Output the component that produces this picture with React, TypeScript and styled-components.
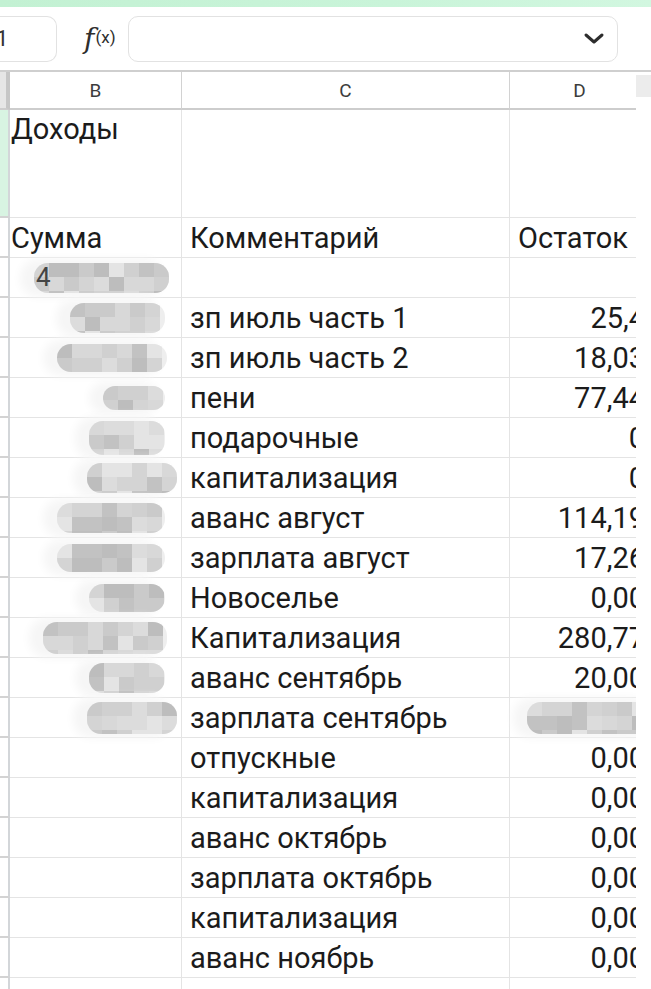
import React from "react";
import styled, { createGlobalStyle } from "styled-components";

const GlobalStyle = createGlobalStyle`
  html, body {
    margin: 0;
    padding: 0;
    background: #ffffff;
    overflow: hidden;
  }
  body {
    font-family: Roboto, "Noto Sans", "Liberation Sans", sans-serif;
    color: #1b1b1b;
  }
`;

const Page = styled.div`
  width: 651px;
  height: 989px;
  overflow: hidden;
  display: flex;
  flex-direction: column;
`;

const TopBand = styled.div`
  flex-shrink: 0;
  height: 7px;
  background: linear-gradient(90deg, #c3f1d3 0%, #c9f4d9 60%, #d2f7e0 100%);
`;

const Toolbar = styled.div`
  flex-shrink: 0;
  height: 63px;
  display: flex;
  align-items: center;
  border-bottom: 2px solid #cfcfcf;
`;

const NameBox = styled.div`
  width: 57px;
  height: 46px;
  box-sizing: border-box;
  border: 1px solid #e2e2e2;
  border-left: none;
  border-radius: 0 10px 10px 0;
  display: flex;
  align-items: center;
  font-size: 22px;
  color: #333;
  overflow: hidden;
  text-indent: -4px;
`;

const Fx = styled.div`
  margin-left: 27px;
  width: 44px;
  display: flex;
  align-items: center;
  color: #2e2e2e;
`;

const FxF = styled.span`
  font-family: "DejaVu Serif", serif;
  font-style: italic;
  font-size: 28px;
  line-height: 1;
`;

const FxX = styled.span`
  font-size: 17px;
  margin-left: 1px;
  margin-top: -4px;
`;

const FormulaInput = styled.div`
  width: 490px;
  height: 46px;
  box-sizing: border-box;
  border: 1px solid #e2e2e2;
  border-radius: 10px;
  display: flex;
  align-items: center;
  justify-content: flex-end;
  padding-right: 12px;
`;

const Body = styled.div`
  display: flex;
  flex-shrink: 0;
`;

const Sheet = styled.div`
  width: 636px;
  overflow: hidden;
  display: grid;
  grid-template-columns: 10px 172px 328px 140px;
  align-content: start;
`;

const Gutter = styled.div`
  flex: 1;
`;

const GutterHead = styled.div`
  margin-top: 3px;
  height: 22px;
  background: #ececec;
`;

const Corner = styled.div`
  height: 38px;
  box-sizing: border-box;
  background: #e6e6e6;
  border-right: 4px solid #c6c6c6;
  border-bottom: 2px solid #cdcdcd;
`;

const ColHead = styled.div`
  height: 38px;
  box-sizing: border-box;
  border-right: 1px solid #d2d2d2;
  border-bottom: 2px solid #cdcdcd;
  display: flex;
  align-items: center;
  justify-content: center;
  font-size: 19px;
  color: #3c3c3c;
`;

const RowHead = styled.div<{ $sel?: boolean; $tall?: boolean }>`
  height: ${({ $tall }) => ($tall ? 108 : 40)}px;
  box-sizing: border-box;
  background: ${({ $sel }) => ($sel ? "#d8f4e2" : "#ffffff")};
  border-right: 2px solid #d3d6d9;
  border-bottom: 2px solid #d3d3d3;
`;

const Cell = styled.div<{ $tall?: boolean; $align?: "left" | "right"; $pad?: number }>`
  height: ${({ $tall }) => ($tall ? 108 : 40)}px;
  box-sizing: border-box;
  border-right: 1px solid #e4e4e4;
  border-bottom: 1px solid #e4e4e4;
  display: flex;
  align-items: ${({ $tall }) => ($tall ? "flex-start" : "center")};
  justify-content: ${({ $align }) => ($align === "right" ? "flex-end" : "flex-start")};
  padding: ${({ $tall }) => ($tall ? "1px" : "0")} ${({ $align }) => ($align === "right" ? "4px" : "0")} 0
    ${({ $pad }) => $pad ?? 0}px;
  font-size: 29px;
  line-height: 36px;
  white-space: nowrap;
  overflow: visible;
  position: relative;
`;

const Redact = styled.div<{ $w: number; $h: number; $r: number }>`
  position: relative;
  width: ${({ $w }) => $w}px;
  height: ${({ $h }) => $h}px;
  margin-right: ${({ $r }) => $r}px;
  border-radius: 14px;
  background: #eeeeee;
  box-shadow: -10px 0 10px 4px #f6f6f6;
  display: flex;
  flex-wrap: wrap;
  overflow: hidden;
  z-index: 1;
`;

const Tile = styled.div<{ $shade: string }>`
  width: 15px;
  height: 14px;
  background: ${({ $shade }) => $shade};
`;

const Ghost = styled.span`
  position: absolute;
  left: 2px;
  top: -4px;
  font-size: 26px;
  color: #444;
  z-index: 2;
`;

const SHADES = ["#d4d4d4", "#cacaca", "#dcdcdc", "#c2c2c2", "#d8d8d8", "#e4e4e4", "#bdbdbd", "#d0d0d0"];

function Mosaic({ w, h, r, seed, glyph }: { w: number; h: number; r: number; seed: number; glyph?: string }) {
  const cols = Math.ceil(w / 15);
  const rows = Math.ceil(h / 14);
  const tiles = Array.from({ length: cols * rows }, (_, i) => SHADES[(i * 5 + seed * 3 + ((i * i) % 7)) % SHADES.length]);
  return (
    <Redact $w={w} $h={h} $r={r}>
      {glyph && <Ghost>{glyph}</Ghost>}
      {tiles.map((s, i) => (
        <Tile key={i} $shade={s} />
      ))}
    </Redact>
  );
}

type Blur = { w: number; h: number; r: number; glyph?: string };

type Row = { blur?: Blur; comment?: string; rest?: string; restBlur?: Blur };

const ROWS: Row[] = [
  { blur: { w: 135, h: 30, r: 8, glyph: "4" } },
  { blur: { w: 95, h: 30, r: 12 }, comment: "зп июль часть 1", rest: "25,4" },
  { blur: { w: 110, h: 28, r: 10 }, comment: "зп июль часть 2", rest: "18,03" },
  { blur: { w: 62, h: 24, r: 12 }, comment: "пени", rest: "77,44" },
  { blur: { w: 76, h: 34, r: 12 }, comment: "подарочные", rest: "0" },
  { blur: { w: 90, h: 30, r: 0 }, comment: "капитализация", rest: "0" },
  { blur: { w: 108, h: 30, r: 12 }, comment: "аванс август", rest: "114,19" },
  { blur: { w: 108, h: 28, r: 12 }, comment: "зарплата август", rest: "17,26" },
  { blur: { w: 76, h: 28, r: 12 }, comment: "Новоселье", rest: "0,00" },
  { blur: { w: 124, h: 32, r: 10 }, comment: "Капитализация", rest: "280,77" },
  { blur: { w: 76, h: 30, r: 12 }, comment: "аванс сентябрь", rest: "20,00" },
  { blur: { w: 90, h: 32, r: 0 }, comment: "зарплата сентябрь", restBlur: { w: 128, h: 32, r: -10 } },
  { comment: "отпускные", rest: "0,00" },
  { comment: "капитализация", rest: "0,00" },
  { comment: "аванс октябрь", rest: "0,00" },
  { comment: "зарплата октябрь", rest: "0,00" },
  { comment: "капитализация", rest: "0,00" },
  { comment: "аванс ноябрь", rest: "0,00" },
  {},
];

export default function App() {
  return (
    <Page>
      <GlobalStyle />
      <TopBand />
      <Toolbar>
        <NameBox>1</NameBox>
        <Fx>
          <FxF>f</FxF>
          <FxX>(x)</FxX>
        </Fx>
        <FormulaInput>
          <svg width="22" height="14" viewBox="0 0 22 14">
            <path d="M3 3 L11 10 L19 3" fill="none" stroke="#2d2d2d" strokeWidth="3" strokeLinecap="round" strokeLinejoin="round" />
          </svg>
        </FormulaInput>
      </Toolbar>
      <Body>
        <Sheet>
          <Corner />
          <ColHead>B</ColHead>
          <ColHead>C</ColHead>
          <ColHead>D</ColHead>

          <RowHead $sel $tall />
          <Cell $tall $pad={1}>Доходы</Cell>
          <Cell $tall />
          <Cell $tall />

          <RowHead />
          <Cell $pad={1}>Сумма</Cell>
          <Cell $pad={8}>Комментарий</Cell>
          <Cell $pad={8}>Остаток</Cell>

          {ROWS.map((row, i) => (
            <React.Fragment key={i}>
              <RowHead />
              <Cell $align="right">
                {row.blur && <Mosaic seed={i} {...row.blur} />}
              </Cell>
              <Cell $pad={8}>{row.comment}</Cell>
              <Cell $align="right">
                {row.restBlur ? <Mosaic seed={i + 3} {...row.restBlur} /> : row.rest}
              </Cell>
            </React.Fragment>
          ))}
        </Sheet>
        <Gutter>
          <GutterHead />
        </Gutter>
      </Body>
    </Page>
  );
}
